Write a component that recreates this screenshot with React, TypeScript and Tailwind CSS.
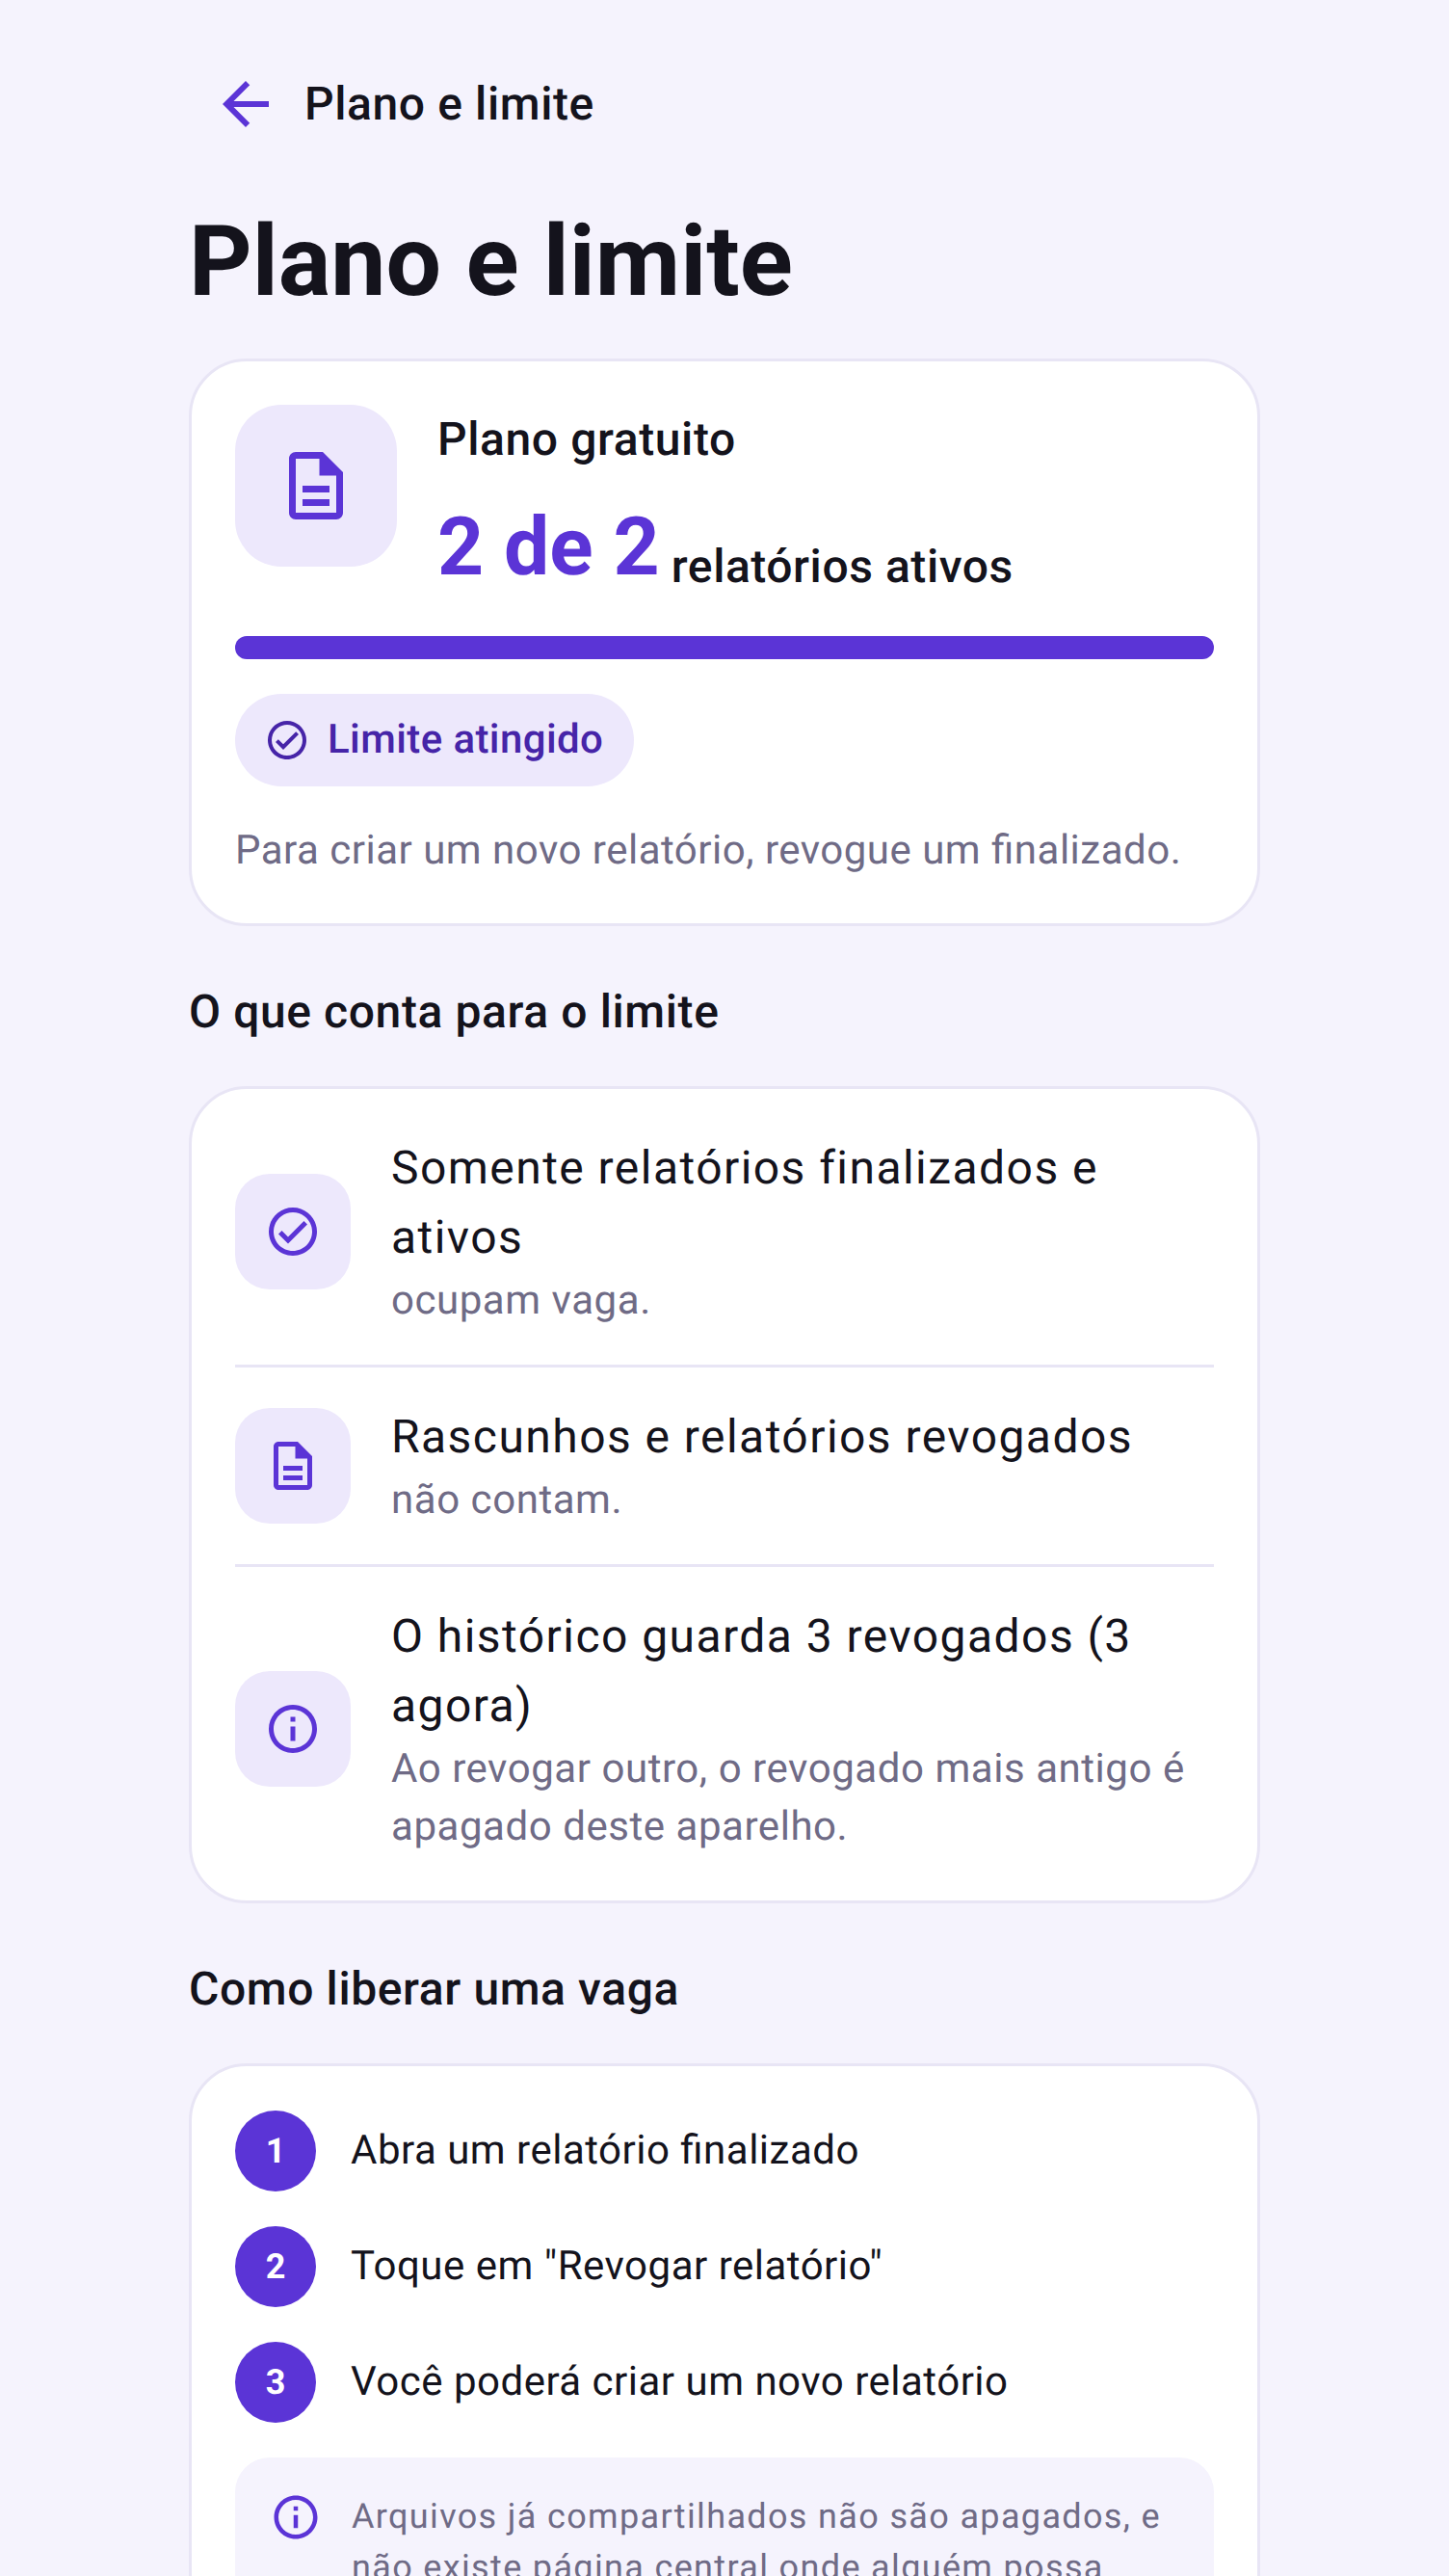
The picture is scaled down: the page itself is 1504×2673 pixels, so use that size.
const DOC = "M8 16h8v2H8zm0-4h8v2H8zm6-10H6c-1.1 0-2 .9-2 2v16c0 1.1.89 2 1.99 2H18c1.1 0 2-.9 2-2V8l-6-6zm4 18H6V4h7v5h5v11z";
const CHECK = "M12 2C6.48 2 2 6.48 2 12s4.48 10 10 10 10-4.48 10-10S17.52 2 12 2zm0 18c-4.41 0-8-3.59-8-8s3.59-8 8-8 8 3.59 8 8-3.59 8-8 8zm4.59-12.42L10 14.17l-2.59-2.58L6 13l4 4 8-8z";
const INFO = "M11 7h2v2h-2zm0 4h2v6h-2zm1-9C6.48 2 2 6.48 2 12s4.48 10 10 10 10-4.48 10-10S17.52 2 12 2zm0 18c-4.41 0-8-3.59-8-8s3.59-8 8-8 8 3.59 8 8-3.59 8-8 8z";
const BACK = "M20 11H7.83l5.59-5.59L12 4l-8 8 8 8 1.41-1.41L7.83 13H20v-2z";

function Icon({ d, className }: { d: string; className: string }) {
  return (
    <svg viewBox="0 0 24 24" fill="currentColor" className={className}>
      <path d={d} />
    </svg>
  );
}

const RULES = [
  { icon: CHECK, title: "Somente relatórios finalizados e ativos", sub: "ocupam vaga." },
  { icon: DOC, title: "Rascunhos e relatórios revogados", sub: "não contam." },
  {
    icon: INFO,
    title: "O histórico guarda 3 revogados (3 agora)",
    sub: "Ao revogar outro, o revogado mais antigo é apagado deste aparelho."
  }
];

const STEPS = ["Abra um relatório finalizado", 'Toque em "Revogar relatório"', "Você poderá criar um novo relatório"];

export default function App() {
  return (
    <div className="h-[2673px] overflow-hidden bg-[#f5f3fd] font-['Roboto',sans-serif] text-[#14131c] [text-rendering:geometricPrecision]">
      <div className="mx-auto w-[1112px]">
        <div className="flex h-[216px] items-center pl-[23px]">
          <Icon d={BACK} className="h-[72px] w-[72px] text-[#5b34d6]" />
          <span className="ml-[25px] text-[48px] leading-[72px] tracking-[0.6px] font-medium">Plano e limite</span>
        </div>
        <h1 className="h-[156px] pt-[3px] text-[102px] leading-[104px] font-bold">Plano e limite</h1>

        <section className="rounded-[60px] border-[3px] border-[#e8e5f5] bg-white p-[45px]">
          <div className="flex gap-[42px]">
            <div className="grid h-[168px] w-[168px] shrink-0 place-items-center rounded-[48px] bg-[#ede8fc]">
              <Icon d={DOC} className="h-[84px] w-[84px] text-[#5b34d6]" />
            </div>
            <div>
              <p className="text-[48px] leading-[72px] tracking-[0.6px] font-medium">Plano gratuito</p>
              <p className="mt-[28px] flex items-end gap-[12px]">
                <span className="text-[84px] leading-[96px] font-bold text-[#5b34d6]">2 de 2</span>
                <span className="-mb-[8px] text-[48px] leading-[72px] tracking-[0.55px] font-medium">relatórios ativos</span>
              </p>
            </div>
          </div>
          <div className="mt-[44px] h-[24px] rounded-[12px] bg-[#5b34d6]" />
          <div className="mt-[36px] inline-flex h-[96px] items-center gap-[18px] rounded-full bg-[#ede8fc] pr-[32px] pl-[30px] text-[#4624a8]">
            <Icon d={CHECK} className="h-[48px] w-[48px]" />
            <span className="text-[42px] leading-[60px] tracking-[0.4px] font-medium">Limite atingido</span>
          </div>
          <p className="mt-[37px] text-[42px] leading-[60px] tracking-[0.5px] text-[#6f6b86] [font-feature-settings:'liga'_1]">
            Para criar um novo relatório, revogue um finalizado.
          </p>
        </section>

        <h2 className="mt-[53px] mb-[41px] text-[48px] leading-[72px] tracking-[0.6px] font-medium">O que conta para o limite</h2>

        <section className="rounded-[60px] border-[3px] border-[#e8e5f5] bg-white px-[45px] pt-[10px] pb-[10px]">
          {RULES.map((rule, i) => (
            <div key={rule.title} className={i > 0 ? "flex items-center gap-[42px] border-t-[3px] border-[#e8e5f5] py-[36px]" : "flex items-center gap-[42px] py-[36px]"}>
              <div className="grid h-[120px] w-[120px] shrink-0 place-items-center rounded-[36px] bg-[#ede8fc]">
                <Icon d={rule.icon} className="h-[60px] w-[60px] text-[#5b34d6]" />
              </div>
              <div>
                <p className="text-[48px] leading-[72px] tracking-[1.45px]">{rule.title}</p>
                <p className="text-[42px] leading-[60px] tracking-[0.55px] text-[#6f6b86]">{rule.sub}</p>
              </div>
            </div>
          ))}
        </section>

        <h2 className="mt-[53px] mb-[41px] text-[48px] leading-[72px] tracking-[0.6px] font-medium">Como liberar uma vaga</h2>

        <section className="rounded-[60px] border-[3px] border-[#e8e5f5] bg-white px-[45px] pt-[46px] pb-[45px]">
          <div className="flex flex-col gap-[36px]">
            {STEPS.map((step, i) => (
              <div key={step} className="flex items-center gap-[36px]">
                <span className="grid h-[84px] w-[84px] shrink-0 place-items-center rounded-full bg-[#5b34d6] text-[36px] font-bold text-white">{i + 1}</span>
                <span className="text-[42px] leading-[60px] tracking-[0.5px] [font-feature-settings:'liga'_1]">{step}</span>
              </div>
            ))}
          </div>
          <div className="mt-[36px] flex gap-[31px] rounded-[36px] bg-[#f5f3fd] px-[36px] pt-[35px] pb-[42px]">
            <Icon d={INFO} className="h-[54px] w-[54px] shrink-0 text-[#5b34d6]" />
            <p className="text-[36px] leading-[53px] tracking-[1.35px] text-[#6f6b86]">
              Arquivos já compartilhados não são apagados, e não existe página central onde alguém possa
            </p>
          </div>
        </section>
      </div>
    </div>
  );
}
